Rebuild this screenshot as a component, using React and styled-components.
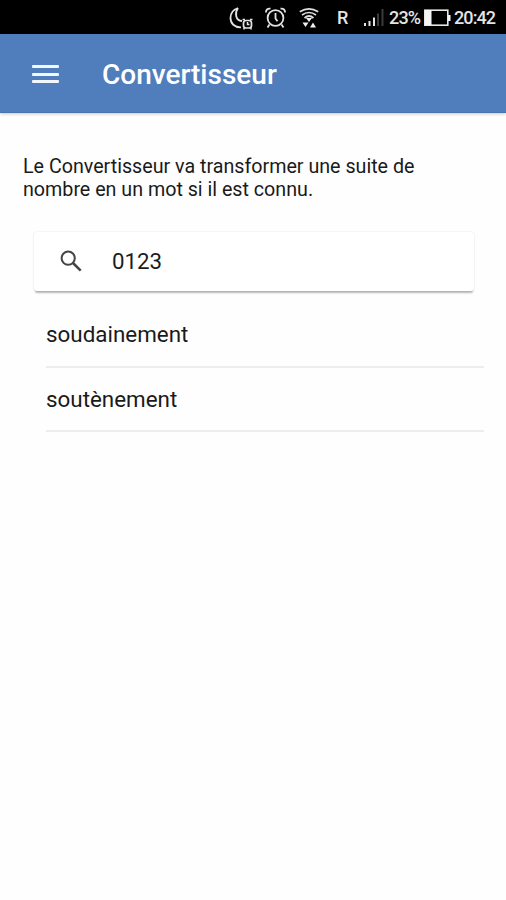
import React from 'react';
import styled, { createGlobalStyle } from 'styled-components';

const GlobalStyle = createGlobalStyle`
  * { box-sizing: border-box; }
  body { margin: 0; background: #fefefe; font-family: Roboto, "Liberation Sans", sans-serif; color: #1a1a1a; }
`;

const Screen = styled.div`
  width: 506px;
  height: 900px;
  display: flex;
  flex-direction: column;
  background: #fefefe;
  overflow: hidden;
`;

const StatusBar = styled.div`
  height: 34px;
  flex: none;
  display: flex;
  align-items: center;
  background: #000;
  color: #e4e4e4;
  padding: 2px 0 0 229px;
`;

const StatusIcon = styled.svg`
  display: block;
  flex: none;
  margin-right: ${(p) => p.$gap}px;
`;

const StatusText = styled.span`
  flex: none;
  width: ${(p) => p.$width}px;
  margin-right: ${(p) => p.$gap || 0}px;
  font-size: 18px;
  line-height: 32px;
  font-weight: 500;
  letter-spacing: ${(p) => p.$spacing || 0}px;
  white-space: nowrap;
`;

const Toolbar = styled.header`
  height: 79px;
  flex: none;
  display: flex;
  align-items: center;
  gap: 43px;
  padding-left: 32px;
  background: #507ebc;
  border-bottom: 1px solid #4b73a9;
  box-shadow: 0 1px 3px rgba(0, 0, 0, 0.22);
`;

const MenuButton = styled.button`
  width: 27px;
  height: 18px;
  margin-top: 2px;
  padding: 0;
  border: 0;
  background: none;
  display: flex;
  flex-direction: column;
  justify-content: space-between;
`;

const MenuLine = styled.span`
  width: 27px;
  height: 3px;
  border-radius: 1px;
  background: #f1f7fc;
`;

const Title = styled.h1`
  margin: 3px 0 0;
  font-size: 28px;
  line-height: 36px;
  font-weight: 500;
  color: #fff;
`;

const Intro = styled.p`
  margin: 42px 0 0 23px;
  font-size: 19.7px;
  line-height: 23px;
  letter-spacing: -0.01px;
`;

const SearchBar = styled.label`
  margin: 31px 32px 0 34px;
  height: 59px;
  display: flex;
  align-items: center;
  gap: 30px;
  padding: 0 0 1px 26px;
  border-radius: 3px;
  background: #fff;
  box-shadow: 0 3px 2px -1px rgba(0, 0, 0, 0.28), 0 0 2px rgba(0, 0, 0, 0.13);
`;

const SearchIcon = styled.svg`
  display: block;
  width: 22px;
  height: 22px;
`;

const SearchInput = styled.input`
  width: 320px;
  padding: 0;
  border: 0;
  outline: 0;
  background: none;
  color: #1c1c1c;
  font: 400 22.3px/30px Roboto, "Liberation Sans", sans-serif;
`;

const List = styled.ul`
  list-style: none;
  margin: 11px 22px 0 46px;
  padding: 0;
`;

const Item = styled.li`
  height: ${(p) => p.$height}px;
  padding-bottom: ${(p) => p.$lift}px;
  display: flex;
  align-items: center;
  border-bottom: 2px solid #ededed;
  font-size: 22.4px;
`;

function MoonAlarm() {
  return (
    <StatusIcon $gap={12} width="24" height="24" viewBox="0 0 24 24" fill="none" stroke="#e2e2e2">
      <path d="M9 2C4.500 3.500 1.500 7 1.500 12c0 5.500 4 9.500 10.500 9.300M9 2C5.500 7 6.500 14.500 13 15" strokeWidth="1.800" />
      <rect x="14.500" y="14.500" width="8" height="7.500" rx="2.500" strokeWidth="1.700" />
      <path d="M18.500 16V18.500H20.500M13.500 13.500h2.500M21 13.500h2.500M15 21.500v2M22 21.500v2" strokeWidth="1.500" />
    </StatusIcon>
  );
}

function Alarm() {
  return (
    <StatusIcon $gap={13} width="21" height="22" viewBox="0 0 21 22" fill="none" stroke="#e2e2e2">
      <circle cx="10.500" cy="11" r="7.900" strokeWidth="1.800" />
      <path d="M10.500 6v5.500l2 2.800M1 5.500C.8 3 2.500 1.200 5.500 1.700M15.500 1.700C18.500 1.200 20.200 3 20 5.500M4.500 17.500L2.500 20.500M16.500 17.500l2 3" strokeWidth="1.800" />
    </StatusIcon>
  );
}

function Wifi() {
  return (
    <StatusIcon $gap={18} width="20" height="22" viewBox="0 0 20 22" fill="none" stroke="#dedede" strokeWidth="1.700">
      <path d="M.8 4.800Q10-1 19.200 4.800M3 8Q10 3 17 8M5.500 11Q10 7 14.500 11" />
      <path d="M7 11h6l-3 4zM3.500 15.500h6L6.500 20zM11 20.500l3-5 3 5z" fill="#f0f0f0" stroke="none" />
    </StatusIcon>
  );
}

function Signal() {
  return (
    <StatusIcon $gap={5} width="20" height="20" viewBox="0 0 20 20">
      <path d="M0 15h2v3H0zM4.500 13h2v5h-2zM9 9.500h2V18H9z" fill="#e4e4e4" />
      <path d="M13 5.500h2V18h-2zM17.500 1h2v17h-2z" fill="#3b3b3b" />
    </StatusIcon>
  );
}

function Battery() {
  return (
    <StatusIcon $gap={3} width="27" height="18" viewBox="0 0 27 18">
      <rect x="0.800" y="1.200" width="23" height="15" fill="none" stroke="#e6e6e6" strokeWidth="1.600" />
      <path d="M1 1h6.500v15H1zM24 6h2.500v6H24z" fill="#f5f5f5" />
    </StatusIcon>
  );
}

export default function App() {
  return (
    <Screen>
      <GlobalStyle />
      <StatusBar>
        <MoonAlarm />
        <Alarm />
        <Wifi />
        <StatusText $width={11} $gap={16}>R</StatusText>
        <Signal />
        <StatusText $width={32} $gap={3} $spacing={-0.8}>23%</StatusText>
        <Battery />
        <StatusText $width={44} $spacing={-0.9}>20:42</StatusText>
      </StatusBar>
      <Toolbar>
        <MenuButton aria-label="Menu">
          <MenuLine />
          <MenuLine />
          <MenuLine />
        </MenuButton>
        <Title>Convertisseur</Title>
      </Toolbar>
      <Intro>
        Le Convertisseur va transformer une suite de
        <br />
        nombre en un mot si il est connu.
      </Intro>
      <SearchBar>
        <SearchIcon viewBox="0 0 22 22" fill="none" stroke="#444" strokeWidth="2">
          <circle cx="8.200" cy="8.200" r="6.600" />
          <path d="M13 13l7.700 7.700" strokeWidth="2.500" />
        </SearchIcon>
        <SearchInput defaultValue="0123" aria-label="Nombre" />
      </SearchBar>
      <List>
        <Item $height={66} $lift={0}>soudainement</Item>
        <Item $height={64} $lift={1}>soutènement</Item>
      </List>
    </Screen>
  );
}
